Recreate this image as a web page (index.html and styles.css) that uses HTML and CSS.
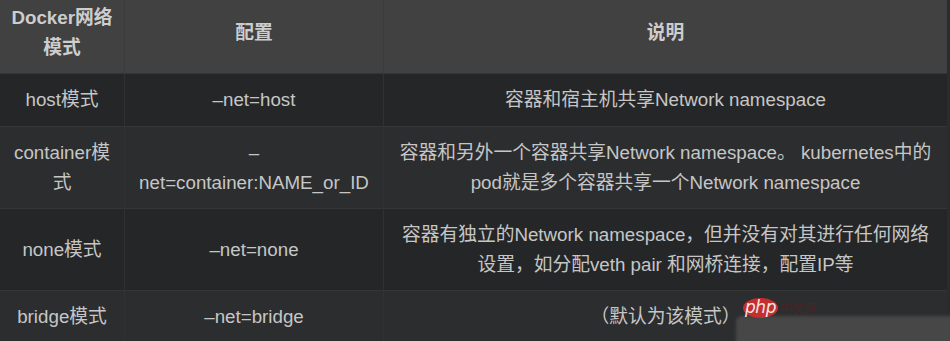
FILE: index.html
```html
<!DOCTYPE html>
<html lang="zh-CN">
<head>
<meta charset="utf-8">
<title>Docker网络模式</title>
<link rel="stylesheet" href="styles.css">
</head>
<body>
<div class="page">
  <table class="modes">
    <colgroup>
      <col class="c1"><col class="c2"><col class="c3">
    </colgroup>
    <thead>
      <tr>
        <th>Docker网络<br>模式</th>
        <th>配置</th>
        <th>说明</th>
      </tr>
    </thead>
    <tbody>
      <tr class="r1">
        <td>host模式</td>
        <td>–net=host</td>
        <td>容器和宿主机共享Network namespace</td>
      </tr>
      <tr class="r2">
        <td>container模<br>式</td>
        <td>–<br>net=container:NAME_or_ID</td>
        <td>容器和另外一个容器共享Network namespace。 kubernetes中的<br>pod就是多个容器共享一个Network namespace</td>
      </tr>
      <tr class="r3">
        <td>none模式</td>
        <td>–net=none</td>
        <td>容器有独立的Network namespace，但并没有对其进行任何网络<br>设置，如分配veth pair 和网桥连接，配置IP等</td>
      </tr>
      <tr class="r4">
        <td>bridge模式</td>
        <td>–net=bridge</td>
        <td>（默认为该模式）</td>
      </tr>
    </tbody>
  </table>
  <div class="mark-blur"></div>
  <div class="mark">
    <span class="php">php</span><span class="cn">中文网</span>
  </div>
</div>
</body>
</html>
```
FILE: styles.css
```css
html, body {
  margin: 0;
  padding: 0;
  background: #2b2b2d;
}
.page {
  position: relative;
  width: 950px;
  height: 341px;
  overflow: hidden;
  font-family: "Liberation Sans", "Noto Sans CJK SC", sans-serif;
  font-size: 18.75px;
  line-height: 30px;
  color: #c6c6c6;
}
.modes {
  width: 947px;
  border-collapse: separate;
  border-spacing: 0;
  table-layout: fixed;
}
.c1 { width: 125px; }
.c2 { width: 259px; }
.c3 { width: 563px; }
.modes th {
  background: #414141;
  color: #cdcdcd;
  font-weight: bold;
  padding: 3px 4px 10px;
  border-bottom: 1px solid #363636;
  border-right: 1px solid #3b3b3b;
  text-align: center;
  vertical-align: middle;
}
.modes td {
  padding: 11px 4px;
  text-align: center;
  vertical-align: middle;
  border-bottom: 1px solid #353638;
  border-right: 1px solid #303133;
  white-space: nowrap;
}
.modes th:last-child,
.modes td:last-child { border-right: none; }
.r1 td, .r3 td { background: #252628; }
.r2 td, .r4 td { background: #2c2d2f; }
.r2 td, .r3 td { padding-top: 11px; padding-bottom: 10px; }
.r4 td { border-bottom: none; padding-bottom: 30px; }
.mark-blur {
  position: absolute;
  left: 736px;
  top: 316px;
  width: 230px;
  height: 40px;
  background: #474747;
  border-radius: 6px;
  filter: blur(1.5px);
}
.mark {
  position: absolute;
  left: 743px;
  top: 298px;
  display: flex;
  align-items: center;
  gap: 2px;
}
.php {
  display: block;
  width: 35px;
  height: 20px;
  border-radius: 50%;
  background: #c22f2e;
  color: #f5e4e4;
  font-family: "DejaVu Sans", sans-serif;
  font-style: italic;
  font-size: 17px;
  line-height: 18px;
  letter-spacing: -0.5px;
  text-align: center;
}
.cn {
  color: #4a2424;
  font-family: "Noto Sans CJK SC", sans-serif;
  font-size: 12px;
  line-height: 14px;
}
```
